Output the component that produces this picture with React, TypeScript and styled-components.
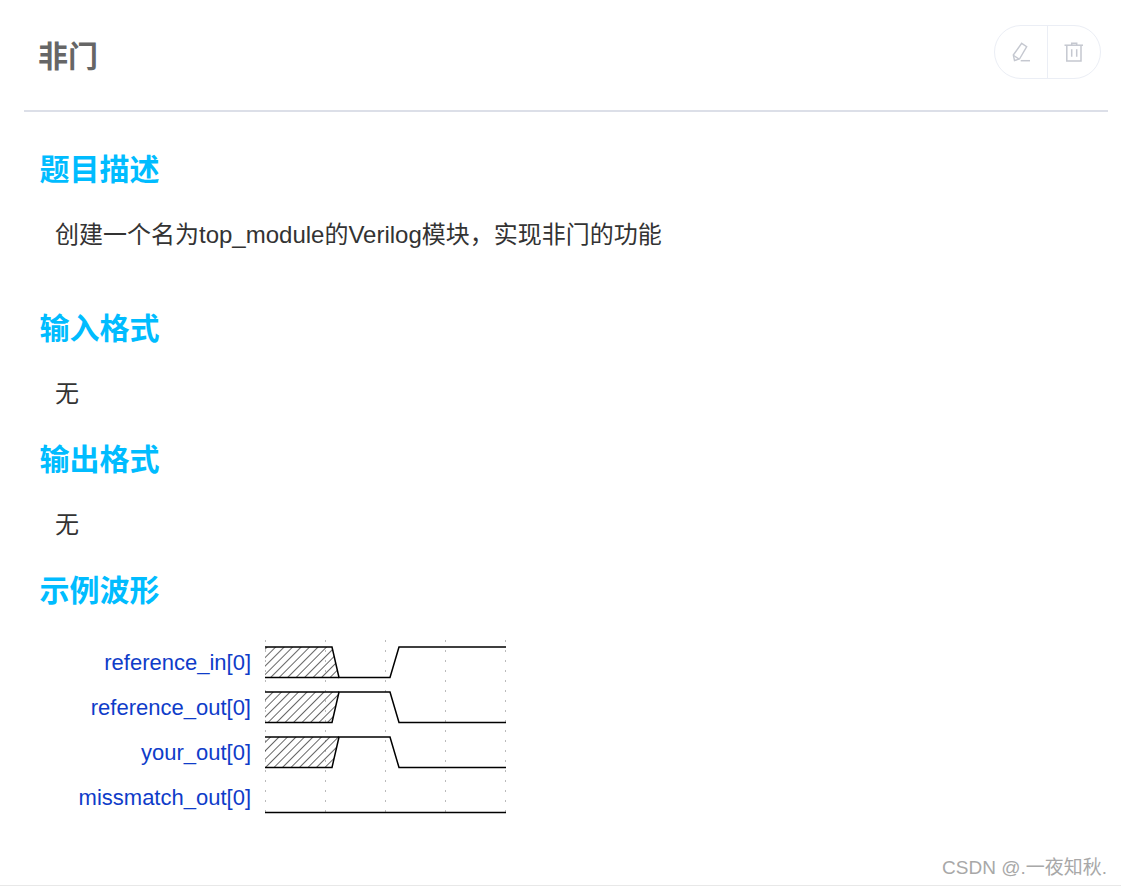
import React, { FC } from 'react';
import styled, { createGlobalStyle } from 'styled-components';

const GlobalStyle = createGlobalStyle`
  html, body {
    margin: 0;
    padding: 0;
    background: #fff;
  }
  body {
    font-family: "Liberation Sans", "Noto Sans CJK SC", sans-serif;
  }
`;

const Page = styled.div`
  position: relative;
  width: 1121px;
  height: 886px;
  box-sizing: border-box;
  overflow: hidden;
  border-bottom: 1px solid #e8e8e8;
`;

const Header = styled.header`
  display: flex;
  align-items: flex-start;
  justify-content: space-between;
  box-sizing: border-box;
  width: 1084px;
  height: 112px;
  margin-left: 24px;
  padding: 25px 7px 0 14px;
  border-bottom: 2px solid #dcdfe8;
`;

const Title = styled.h1`
  margin: 10px 0 0;
  font-size: 30px;
  line-height: 44px;
  font-weight: 700;
  color: #666;
`;

const ActionGroup = styled.div`
  display: flex;
  height: 54px;
  box-sizing: border-box;
  border: 1px solid #ebeef5;
  border-radius: 27px;
`;

const ActionButton = styled.div<{ $divided?: boolean }>`
  display: flex;
  align-items: center;
  justify-content: center;
  width: ${({ $divided }) => ($divided ? 53 : 52)}px;
  box-sizing: border-box;
  border-left: ${({ $divided }) => ($divided ? '1px solid #ebeef5' : 'none')};
`;

const Content = styled.main`
  padding-left: 40px;
`;

const Section = styled.section<{ $top: number }>`
  margin-top: ${({ $top }) => $top}px;
`;

const Heading = styled.h2`
  margin: 0 0 0 -0.5px;
  font-size: 30px;
  line-height: 44px;
  font-weight: 700;
  color: #00bcff;
`;

const Body = styled.p`
  margin: 21px 0 0 15px;
  font-size: 24px;
  line-height: 44px;
  color: #333;
`;

const Wave = styled.div`
  display: flex;
  align-items: flex-start;
  margin-top: 27px;
`;

const Labels = styled.div`
  display: flex;
  flex-direction: column;
  width: 211px;
`;

const Label = styled.div`
  height: 45px;
  line-height: 45px;
  text-align: right;
  font-size: 22px;
  color: #0f3cc9;
  white-space: nowrap;
`;

const WaveSvg = styled.svg`
  display: block;
  margin-left: 14px;
`;

const Watermark = styled.div`
  position: absolute;
  right: 14px;
  bottom: 4px;
  font-size: 19px;
  line-height: 26px;
  color: #a8a8a8;
  white-space: nowrap;
`;

const signals = ['reference_in[0]', 'reference_out[0]', 'your_out[0]', 'missmatch_out[0]'];
const gridX = [0.5, 60.5, 120.5, 180.5, 240.5];

const PencilIcon: FC = () => (
  <svg width="22" height="22" viewBox="0 0 22 22" fill="none" stroke="#c5c8d0" strokeWidth="1.4">
    <path d="M11.7 2.3 L16.7 5.7 L9.5 18 L4.5 19.5 L3.3 14 Z" />
    <path d="M3.6 14.5 L9 18" />
    <path d="M10.7 19.7 H20" strokeWidth="1.5" />
  </svg>
);

const TrashIcon: FC = () => (
  <svg width="20" height="22" viewBox="0 0 20 22" fill="none" stroke="#c5c8d0" strokeWidth="1.5">
    <path d="M0.5 4.2 H19" />
    <path d="M7.7 4.2 V2.3 H12.7 V4.2" />
    <path d="M2.8 4.2 V20 H17 V4.2" />
    <path d="M7.7 8.3 V15.7 M12.7 8.3 V15.7" />
  </svg>
);

const Waveform: FC = () => (
  <WaveSvg width="242" height="176" viewBox="0 0 242 176">
    <defs>
      <pattern id="hatch" width="6" height="6" patternUnits="userSpaceOnUse" patternTransform="rotate(45)">
        <line x1="0" y1="0" x2="0" y2="6" stroke="#333" strokeWidth="1.5" />
      </pattern>
    </defs>
    {gridX.map((x) => (
      <line key={x} x1={x} y1="0" x2={x} y2="176" stroke="#bbb" strokeWidth="1" strokeDasharray="2 8" />
    ))}
    <path d="M0 7 H67 L74 37.5 H0 Z" fill="url(#hatch)" />
    <path d="M0 52 H74 L67 82.5 H0 Z" fill="url(#hatch)" />
    <path d="M0 97 H74 L67 127.5 H0 Z" fill="url(#hatch)" />
    <g fill="none" stroke="#000" strokeWidth="1.5">
      <path d="M0 7 H67 L74 37.5 H125 L134 7 H241" />
      <path d="M0 37.5 H74" />
      <path d="M0 82.5 H67 L74 52 H125 L134 82.5 H241" />
      <path d="M0 52 H74" />
      <path d="M0 127.5 H67 L74 97 H125 L134 127.5 H241" />
      <path d="M0 97 H74" />
      <path d="M0 172.5 H241" />
    </g>
  </WaveSvg>
);

const App: FC = () => (
  <Page>
    <GlobalStyle />
    <Header>
      <Title>非门</Title>
      <ActionGroup>
        <ActionButton>
          <PencilIcon />
        </ActionButton>
        <ActionButton $divided>
          <TrashIcon />
        </ActionButton>
      </ActionGroup>
    </Header>
    <Content>
      <Section $top={36}>
        <Heading>题目描述</Heading>
        <Body>创建一个名为top_module的Verilog模块，实现非门的功能</Body>
      </Section>
      <Section $top={50}>
        <Heading>输入格式</Heading>
        <Body>无</Body>
      </Section>
      <Section $top={22}>
        <Heading>输出格式</Heading>
        <Body>无</Body>
      </Section>
      <Section $top={22}>
        <Heading>示例波形</Heading>
        <Wave>
          <Labels>
            {signals.map((s) => (
              <Label key={s}>{s}</Label>
            ))}
          </Labels>
          <Waveform />
        </Wave>
      </Section>
    </Content>
    <Watermark>CSDN @.一夜知秋.</Watermark>
  </Page>
);

export default App;
